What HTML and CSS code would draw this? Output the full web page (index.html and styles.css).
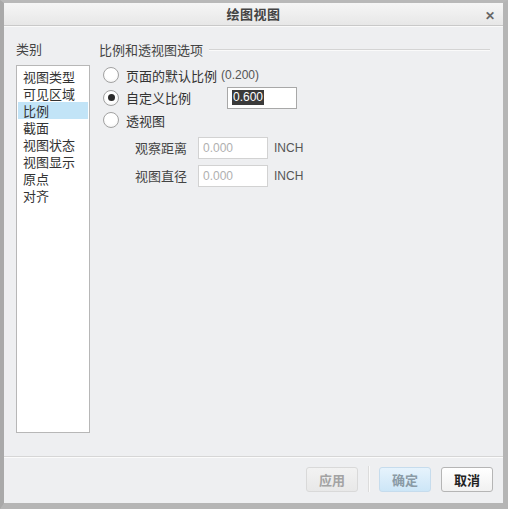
FILE: index.html
```html
<!DOCTYPE html>
<html>
<head>
<meta charset="utf-8">
<link rel="stylesheet" href="styles.css">
</head>
<body>
<div class="window">
  <div class="titlebar">
    <span class="title">绘图视图</span>
    <span class="close">✕</span>
  </div>
  <div class="content">
    <div class="left">
      <div class="label">类别</div>
      <div class="listbox">
        <div class="item">视图类型</div>
        <div class="item">可见区域</div>
        <div class="item selected">比例</div>
        <div class="item">截面</div>
        <div class="item">视图状态</div>
        <div class="item">视图显示</div>
        <div class="item">原点</div>
        <div class="item">对齐</div>
      </div>
    </div>
    <div class="right">
      <div class="group-title"><span>比例和透视图选项</span><span class="rule"></span></div>
      <div class="radio-row">
        <span class="radio"></span><span class="rlabel">页面的默认比例</span><span class="num">(0.200)</span>
      </div>
      <div class="radio-row">
        <span class="radio checked"></span><span class="rlabel wide">自定义比例</span>
        <span class="input main"><span class="hl">0.600</span></span>
      </div>
      <div class="radio-row">
        <span class="radio"></span><span class="rlabel">透视图</span>
      </div>
      <div class="field-row first">
        <span class="flabel">观察距离</span><span class="input dis">0.000</span><span class="unit">INCH</span>
      </div>
      <div class="field-row">
        <span class="flabel">视图直径</span><span class="input dis">0.000</span><span class="unit">INCH</span>
      </div>
    </div>
  </div>
  <div class="footer">
    <button class="btn disabled">应用</button>
    <span class="vsep"></span>
    <button class="btn primary">确定</button>
    <button class="btn bold">取消</button>
  </div>
</div>
</body>
</html>
```
FILE: styles.css
```css
html, body {
  margin: 0;
  padding: 0;
}
body {
  width: 508px;
  height: 509px;
  background: #b3b3b3;
  font-family: "Noto Sans CJK SC", "Liberation Sans", sans-serif;
  font-size: 13px;
  color: #333;
}
.window {
  box-sizing: border-box;
  width: 508px;
  height: 509px;
  border-top: 3px solid #b9b9b9;
  border-left: 4px solid #a9a9a9;
  border-right: 5px solid #b5b5b5;
  border-bottom: 6px solid #b5b5b5;
  background: #eeeff1;
  display: flex;
  flex-direction: column;
}
.titlebar {
  height: 22px;
  flex: none;
  position: relative;
  display: flex;
  align-items: center;
  justify-content: center;
  background: linear-gradient(#f6f6f6, #e7e7e7);
  border-bottom: 1px solid #c9c9c9;
}
.title {
  font-weight: bold;
  font-size: 13px;
  color: #444;
  letter-spacing: 0.5px;
  line-height: 16px;
}
.close {
  position: absolute;
  right: 8px;
  top: 3px;
  font-size: 12px;
  font-weight: bold;
  color: #666;
}
.content {
  flex: 1;
  display: flex;
  padding: 14px 0 0 12px;
  box-shadow: inset 0 1px 0 #fafafa;
}
.left {
  width: 74px;
  display: flex;
  flex-direction: column;
}
.label {
  height: 18px;
  line-height: 18px;
  color: #444;
}
.listbox {
  margin-top: 7px;
  height: 368px;
  box-sizing: border-box;
  background: #fff;
  border: 1px solid #b7b7b7;
  padding: 2px 1px;
}
.item {
  height: 17px;
  line-height: 17px;
  padding-left: 5px;
  color: #333;
  overflow: hidden;
}
.item.selected {
  background: #c2e4f7;
}
.right {
  flex: 1;
  padding-left: 9px;
  padding-right: 13px;
}
.group-title {
  display: flex;
  align-items: center;
  height: 18px;
  color: #444;
}
.group-title .rule {
  flex: 1;
  height: 0;
  border-top: 1px solid #d4d4d4;
  border-bottom: 1px solid #fafafa;
  margin-left: 6px;
  margin-top: 2px;
}
.radio-row {
  display: flex;
  align-items: center;
  height: 22.5px;
  padding-left: 4px;
}
.group-title + .radio-row {
  margin-top: 6px;
}
.radio {
  box-sizing: border-box;
  width: 16px;
  height: 16px;
  border-radius: 50%;
  border: 1px solid #a2a2a2;
  background: radial-gradient(circle at 50% 40%, #ffffff 50%, #ececec 100%);
  margin-right: 7px;
  position: relative;
  flex: none;
}
.radio.checked::after {
  content: "";
  position: absolute;
  left: 3.5px;
  top: 3.5px;
  width: 7px;
  height: 7px;
  border-radius: 50%;
  background: #2b2b2b;
}
.rlabel {
  color: #333;
}
.rlabel.wide {
  width: 101px;
}
.num {
  font-family: "Liberation Sans", sans-serif;
  font-size: 12px;
  color: #555;
  margin-left: 4px;
}
.input {
  box-sizing: border-box;
  display: inline-flex;
  align-items: center;
  width: 70px;
  height: 22px;
  background: #fff;
  border: 1px solid #c5c5c5;
  padding-left: 4px;
  font-family: "Liberation Sans", sans-serif;
  font-size: 12px;
}
.input.main {
  border-color: #a8a8a8;
}
.hl {
  background: #3a3a3a;
  color: #fff;
  padding: 0 1px;
  line-height: 15px;
}
.input.dis {
  color: #b0b0b0;
  border-color: #d2d2d2;
}
.field-row {
  display: flex;
  align-items: center;
  height: 28px;
  padding-left: 36px;
}
.field-row.first {
  margin-top: 2px;
}
.flabel {
  width: 63px;
  color: #444;
}
.unit {
  font-family: "Liberation Sans", sans-serif;
  font-size: 12px;
  color: #555;
  margin-left: 6px;
}
.footer {
  height: 44px;
  flex: none;
  display: flex;
  align-items: center;
  justify-content: flex-end;
  padding-right: 10px;
  padding-bottom: 2px;
  border-top: 1px solid #d6d6d6;
  box-shadow: inset 0 1px 0 #fbfbfb;
  gap: 10px;
}
.btn {
  box-sizing: border-box;
  width: 52px;
  height: 25px;
  border-radius: 3px;
  font-family: "Noto Sans CJK SC", sans-serif;
  font-size: 13px;
  font-weight: bold;
  padding: 0;
  border: 1px solid #c4c4c4;
  background: linear-gradient(#fbfbfb, #ebebeb);
  color: #333;
}
.btn.disabled {
  color: #a3a3a3;
  border-color: #d9d9d9;
  background: linear-gradient(#f2f2f2, #e8e8e8);
}
.btn.primary {
  color: #8a9aa5;
  border-color: #c6dced;
  background: linear-gradient(#e6f3fc, #cde6f7);
}
.btn.bold {
  color: #222;
  border-color: #b5b5b5;
  background: linear-gradient(#ffffff, #f1f1f1);
}
.vsep {
  width: 1px;
  height: 26px;
  background: #dcdcdc;
  box-shadow: 1px 0 0 #fafafa;
}
```
